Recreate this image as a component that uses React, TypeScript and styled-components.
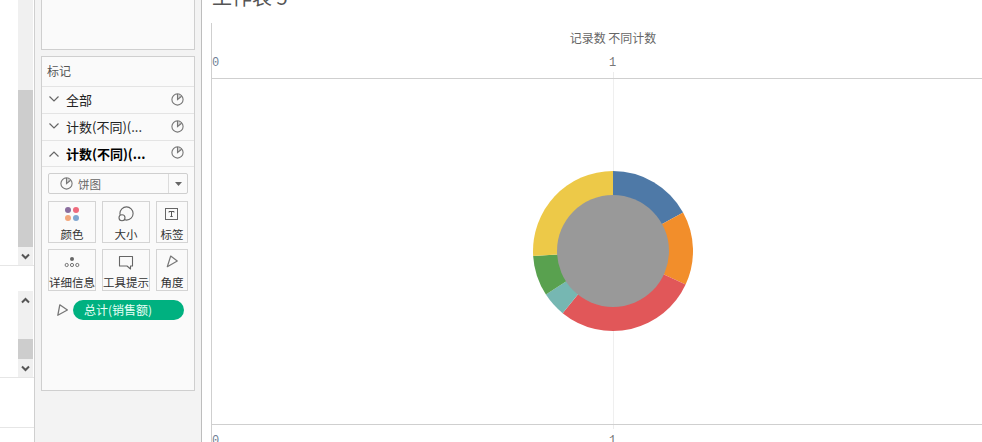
import React from "react";
import styled, { createGlobalStyle } from "styled-components";

const CJK = `"Noto Sans CJK SC", "Liberation Sans", sans-serif`;

const Global = createGlobalStyle`
  html, body { margin: 0; padding: 0; background: #fff; overflow: hidden; }
  * { box-sizing: border-box; }
`;

const Page = styled.div`
  display: grid;
  grid-template-columns: 34px 168px 9px 1fr;
  width: 982px;
  height: 442px;
  overflow: hidden;
  font-family: ${CJK};
`;

const Rail = styled.div`
  display: flex;
  flex-direction: column;
`;

const RailBlock = styled.div<{ $h: number; $pad?: number; $line?: boolean }>`
  height: ${(p) => p.$h}px;
  padding-top: ${(p) => p.$pad ?? 0}px;
  border-bottom: ${(p) => (p.$line ? "1px solid #e6e6e6" : "none")};
  display: flex;
  flex-direction: column;
  flex: none;
`;

const Strip = styled.div`
  margin-left: 18px;
  width: 15px;
  flex: 1;
  background: #f0f0f0;
  display: flex;
  flex-direction: column;
`;

const StripSpace = styled.div<{ $h: number }>`
  height: ${(p) => p.$h}px;
  flex: none;
`;

const Thumb = styled.div<{ $h: number }>`
  height: ${(p) => p.$h}px;
  background: #cdcdcd;
  flex: none;
`;

const StripArrow = styled.div`
  height: 18px;
  flex: none;
  display: flex;
  align-items: center;
  justify-content: center;
`;

const Panel = styled.div`
  background: #f3f3f3;
  border-left: 1px solid #cfcfcf;
  border-right: 1px solid #bdbdbd;
  padding: 0 6px;
  display: flex;
  flex-direction: column;
  gap: 6px;
`;

const EmptyCard = styled.div`
  height: 50px;
  background: #fafafa;
  border: 1px solid #cfcfcf;
  border-top: none;
`;

const MarksCard = styled.div`
  height: 335px;
  background: #fafafa;
  border: 1px solid #cfcfcf;
`;

const MarksTitle = styled.div`
  height: 30px;
  padding: 0 0 2px 5px;
  display: flex;
  align-items: center;
  font-size: 12px;
  color: #555;
  border-bottom: 1px solid #e4e4e4;
`;

const Row = styled.div<{ $h: number; $bold?: boolean }>`
  height: ${(p) => p.$h}px;
  padding: 0 10px ${(p) => (p.$bold ? 0 : 2)}px 6px;
  display: flex;
  align-items: center;
  gap: 6px;
  font-size: 13px;
  font-weight: ${(p) => (p.$bold ? 700 : 400)};
  color: ${(p) => (p.$bold ? "#000" : "#222")};
  border-bottom: 1px solid #e4e4e4;
  white-space: nowrap;
  & > svg:last-child { margin-left: auto; margin-bottom: ${(p) => (p.$bold ? 2 : 0)}px; }
`;

const TypeSelect = styled.div`
  margin: 6px 0 0 6px;
  width: 140px;
  height: 21px;
  border: 1px solid #cfcfcf;
  border-radius: 2px;
  display: flex;
  align-items: center;
  font-size: 11.5px;
  color: #666;
`;

const TypeMain = styled.div`
  flex: 1;
  height: 100%;
  padding-left: 11px;
  display: flex;
  align-items: center;
  gap: 5px;
  border-right: 1px solid #dcdcdc;
`;

const TypeCaret = styled.div`
  width: 18px;
  display: flex;
  justify-content: center;
`;

const ButtonGrid = styled.div`
  margin: 7px 0 0 6px;
  display: grid;
  grid-template-columns: 48px 48px 32px;
  grid-auto-rows: 42px;
  gap: 6px;
`;

const MarkButton = styled.div`
  border: 1px solid #d4d4d4;
  padding-top: 2px;
  display: flex;
  flex-direction: column;
  align-items: center;
  font-size: 11.5px;
  line-height: 14px;
  color: #333;
  white-space: nowrap;
  & > span { margin-top: 3px; }
`;

const PillRow = styled.div`
  margin: 9px 0 0 15px;
  display: flex;
  align-items: center;
  gap: 5px;
`;

const Pill = styled.div`
  width: 111px;
  height: 20px;
  border-radius: 10px;
  background: #00b180;
  color: #e8fff6;
  font-size: 12px;
  line-height: 20px;
  padding-left: 11px;
  white-space: nowrap;
`;

const Main = styled.div`
  grid-column: 4;
  display: flex;
  flex-direction: column;
  min-width: 0;
`;

const TitleBar = styled.div`
  height: 23px;
  flex: none;
  overflow: hidden;
  margin-left: 1px;
`;

const Title = styled.div`
  margin-top: -17px;
  font-size: 20px;
  line-height: 28px;
  color: #555;
  white-space: nowrap;
`;

const Chart = styled.div`
  flex: 1;
  border-left: 1px solid #cfcfcf;
  display: flex;
  flex-direction: column;
  min-height: 0;
`;

const AxisHead = styled.div`
  height: 56px;
  flex: none;
  border-bottom: 1px solid #cfcfcf;
`;

const AxisTitle = styled.div`
  width: 802px;
  margin-top: 6px;
  height: 18px;
  text-align: center;
  font-size: 12px;
  line-height: 18px;
  color: #666;
  white-space: nowrap;
`;

const TickRow = styled.div<{ $top: number }>`
  display: grid;
  grid-template-columns: 397px 8px;
  margin-top: ${(p) => p.$top}px;
  height: 16px;
  padding-left: 0;
  font-family: "Liberation Mono", monospace;
  font-size: 12px;
  line-height: 16px;
`;

const Tick = styled.span<{ $tone: string }>`
  color: ${(p) => p.$tone};
`;

const TickMark = styled.span<{ $side: "up" | "down" }>`
  position: relative;
  color: #777;
  &::after {
    content: "";
    position: absolute;
    left: 4px;
    width: 1px;
    background: #ececec;
    ${(p) => (p.$side === "up" ? "bottom: -7px; height: 6px;" : "top: -8px; height: 4px;")}
  }
`;

const Plot = styled.svg`
  display: block;
  width: 770px;
  height: 345px;
  flex: none;
`;

const AxisFoot = styled.div`
  flex: 1;
  border-top: 1px solid #cfcfcf;
`;

const Chevron = ({ up, color = "#666", width = 1.2 }: { up?: boolean; color?: string; width?: number }) => (
  <svg width="12" height="8" viewBox="0 0 12 8" fill="none">
    <path d={up ? "M1.5 6.5 L6 2 L10.5 6.5" : "M1.5 1.5 L6 6 L10.5 1.5"} stroke={color} strokeWidth={width} />
  </svg>
);

const ScrollChevron = ({ up }: { up?: boolean }) => (
  <svg width="9" height="7" viewBox="0 0 9 7" fill="none">
    <path d={up ? "M1 5.5 L4.5 2 L8 5.5" : "M1 1.5 L4.5 5 L8 1.5"} stroke="#555" strokeWidth="2" />
  </svg>
);

const PieIcon = () => (
  <svg width="13" height="13" viewBox="0 0 13 13" fill="none">
    <circle cx="6.5" cy="6.5" r="5.6" stroke="#777" strokeWidth="1.1" />
    <path d="M7.2 1.6 V5.5 L10.2 3.1 Z" fill="#c9c9c9" />
    <path d="M6.5 1 V6.5 L10.6 3.2" stroke="#777" strokeWidth="1.1" />
  </svg>
);

const AngleIcon = () => (
  <svg width="11" height="12" viewBox="0 0 11 12" fill="none">
    <path d="M2.8 0.8 L10.4 6 L0.8 11.3 Z" stroke="#777" strokeWidth="1.3" strokeLinejoin="round" />
  </svg>
);

const Icon = ({ children }: { children: React.ReactNode }) => (
  <svg width="20" height="20" viewBox="0 0 20 20" fill="none">{children}</svg>
);

const slices = [
  { end: 61.2, color: "#4e79a7" },
  { end: 114.8, color: "#f28e2b" },
  { end: 219, color: "#e15759" },
  { end: 237, color: "#76b7b2" },
  { end: 266.4, color: "#59a14f" },
  { end: 360, color: "#edc948" },
];

const CX = 401;
const CY = 172;

const polar = (deg: number, r: number) => {
  const a = (deg * Math.PI) / 180;
  return [CX + r * Math.sin(a), CY - r * Math.cos(a)].map((n) => n.toFixed(2)).join(" ");
};

const Donut = () => {
  let start = 0;
  return (
    <Plot viewBox="0 0 770 345">
      <line x1={CX + 0.5} y1="0" x2={CX + 0.5} y2="345" stroke="#efefef" />
      {slices.map((s) => {
        const d = `M${CX} ${CY} L${polar(start, 80)} A80 80 0 ${s.end - start > 180 ? 1 : 0} 1 ${polar(s.end, 80)} Z`;
        start = s.end;
        return <path key={s.color} d={d} fill={s.color} />;
      })}
      <circle cx={CX} cy={CY} r="56" fill="#999" />
    </Plot>
  );
};

export default function App() {
  return (
    <Page>
      <Global />
      <Rail>
        <RailBlock $h={266} $line>
          <Strip>
            <StripSpace $h={90} />
            <Thumb $h={157} />
            <StripArrow><ScrollChevron /></StripArrow>
          </Strip>
        </RailBlock>
        <RailBlock $h={112} $pad={25} $line>
          <Strip>
            <StripArrow><ScrollChevron up /></StripArrow>
            <StripSpace $h={30} />
            <Thumb $h={20} />
            <StripArrow><ScrollChevron /></StripArrow>
          </Strip>
        </RailBlock>
        <RailBlock $h={50} $line />
      </Rail>

      <Panel>
        <EmptyCard />
        <MarksCard>
          <MarksTitle>标记</MarksTitle>
          <Row $h={27}><Chevron />全部<PieIcon /></Row>
          <Row $h={27}><Chevron />计数(不同)(...<PieIcon /></Row>
          <Row $h={26} $bold><Chevron up />计数(不同)(...<PieIcon /></Row>
          <TypeSelect>
            <TypeMain><PieIcon />饼图</TypeMain>
            <TypeCaret>
              <svg width="7" height="4" viewBox="0 0 7 4"><path d="M0 0 H7 L3.5 4 Z" fill="#666" /></svg>
            </TypeCaret>
          </TypeSelect>
          <ButtonGrid>
            <MarkButton>
              <Icon>
                <circle cx="6" cy="6" r="3" fill="#8a6d9e" />
                <circle cx="14" cy="6" r="3" fill="#ef6a7c" />
                <circle cx="6" cy="14" r="3" fill="#f3a77c" />
                <circle cx="14" cy="14" r="3" fill="#7fa6d0" />
              </Icon>
              <span>颜色</span>
            </MarkButton>
            <MarkButton>
              <Icon>
                <circle cx="10.5" cy="9.5" r="6.6" stroke="#666" strokeWidth="1.1" />
                <circle cx="6" cy="13.8" r="3" stroke="#666" strokeWidth="1.1" fill="#fafafa" />
              </Icon>
              <span>大小</span>
            </MarkButton>
            <MarkButton>
              <Icon>
                <rect x="3.5" y="4.5" width="12" height="11" stroke="#666" />
                <path d="M7 8.5 V7.5 H12 V8.5 M9.5 7.5 V12.5 M8.3 12.5 H10.7" stroke="#555" />
              </Icon>
              <span>标签</span>
            </MarkButton>
            <MarkButton>
              <Icon>
                <circle cx="10" cy="7" r="2" fill="#666" />
                <circle cx="4.7" cy="13" r="1.6" stroke="#666" strokeWidth="0.9" />
                <circle cx="10" cy="13" r="1.6" stroke="#666" strokeWidth="0.9" />
                <circle cx="15.3" cy="13" r="1.6" stroke="#666" strokeWidth="0.9" />
              </Icon>
              <span>详细信息</span>
            </MarkButton>
            <MarkButton>
              <Icon>
                <path d="M3.5 4.5 H16.5 V14 H14.5 V17 L11 14 H3.5 Z" stroke="#666" strokeWidth="1.1" strokeLinejoin="round" />
              </Icon>
              <span>工具提示</span>
            </MarkButton>
            <MarkButton>
              <Icon>
                <path d="M8.7 4 L15.3 9 L5.3 14.7 Z" stroke="#777" strokeWidth="1.2" strokeLinejoin="round" />
              </Icon>
              <span>角度</span>
            </MarkButton>
          </ButtonGrid>
          <PillRow>
            <AngleIcon />
            <Pill>总计(销售额)</Pill>
          </PillRow>
        </MarksCard>
      </Panel>

      <Main>
        <TitleBar><Title>工作表 5</Title></TitleBar>
        <Chart>
          <AxisHead>
            <AxisTitle>记录数 不同计数</AxisTitle>
            <TickRow $top={8}>
              <Tick $tone="#6f7f96">0</Tick>
              <TickMark $side="up">1</TickMark>
            </TickRow>
          </AxisHead>
          <Donut />
          <AxisFoot>
            <TickRow $top={8}>
              <Tick $tone="#6f7f96">0</Tick>
              <TickMark $side="down">1</TickMark>
            </TickRow>
          </AxisFoot>
        </Chart>
      </Main>
    </Page>
  );
}
